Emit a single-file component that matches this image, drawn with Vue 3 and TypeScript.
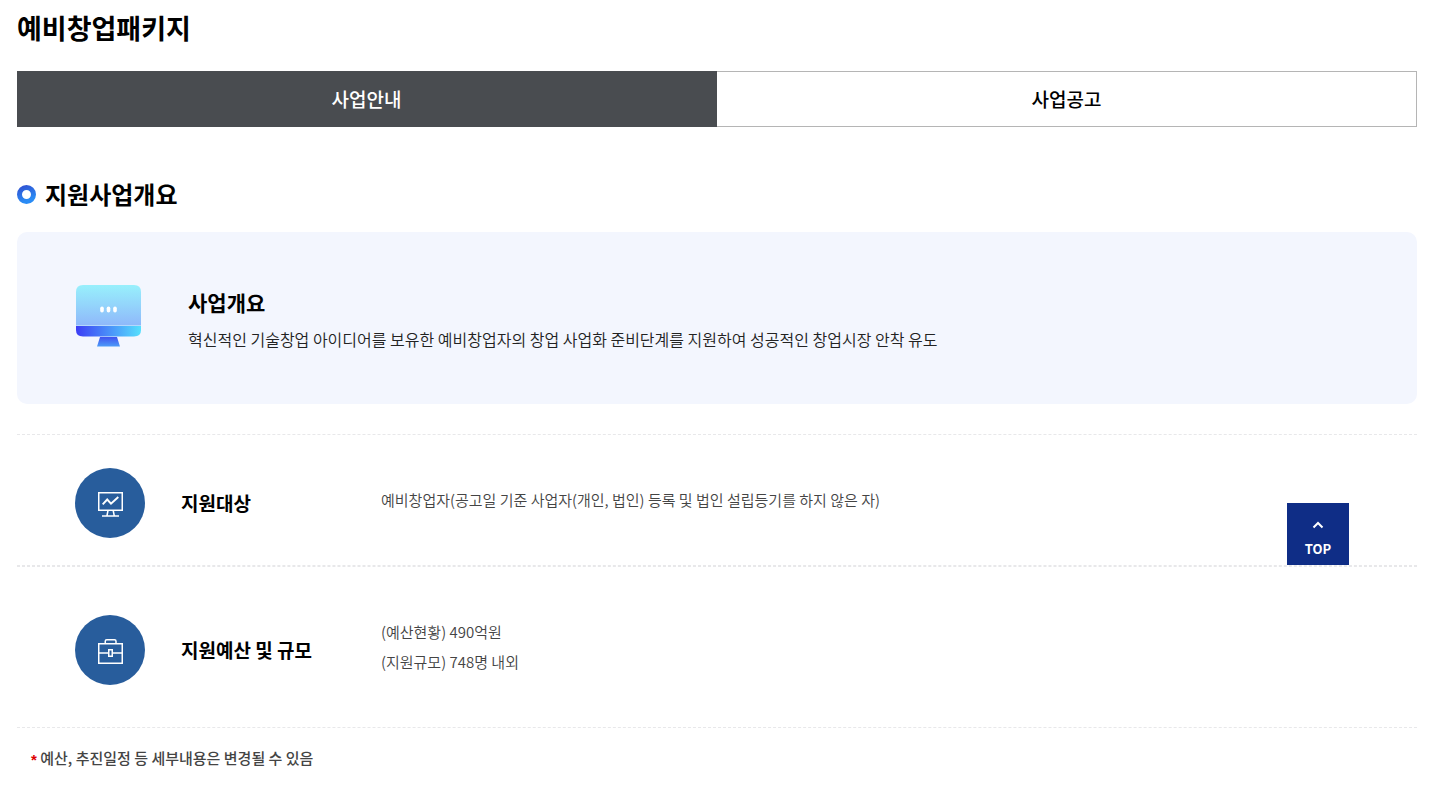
<script setup lang="ts">
import { ref } from 'vue'

type RowIcon = 'chart' | 'briefcase'
interface SupportRow {
  icon: RowIcon
  title: string
  lines: string[]
}

const tabs: string[] = ['사업안내', '사업공고']
const activeTab = ref(0)

const rows: SupportRow[] = [
  {
    icon: 'chart',
    title: '지원대상',
    lines: ['예비창업자(공고일 기준 사업자(개인, 법인) 등록 및 법인 설립등기를 하지 않은 자)'],
  },
  {
    icon: 'briefcase',
    title: '지원예산 및 규모',
    lines: ['(예산현황) 490억원', '(지원규모) 748명 내외'],
  },
]

function scrollToTop(): void {
  window.scrollTo({ top: 0, behavior: 'smooth' })
}
</script>

<template>
  <main class="page">
    <h1 class="page-title">예비창업패키지</h1>

    <nav class="tabs">
      <button
        v-for="(tab, index) in tabs"
        :key="tab"
        type="button"
        class="tab"
        :class="{ active: index === activeTab }"
        :aria-pressed="index === activeTab"
        @click="activeTab = index"
      >{{ tab }}</button>
    </nav>

    <h2 class="section-title">
      <svg class="ring" viewBox="0 0 19 19" aria-hidden="true">
        <defs>
          <linearGradient id="ring-fill" x1="0" y1="0" x2="0.4" y2="1">
            <stop offset="0" stop-color="#2f55d4" />
            <stop offset="1" stop-color="#2a8cf5" />
          </linearGradient>
        </defs>
        <circle cx="9.5" cy="9.5" r="7" fill="none" stroke="url(#ring-fill)" stroke-width="5" />
      </svg>
      <span>지원사업개요</span>
    </h2>

    <section class="overview">
      <svg class="monitor" viewBox="0 0 65 62" aria-hidden="true">
        <defs>
          <linearGradient id="screen-fill" x1="0" y1="0" x2="0" y2="1">
            <stop offset="0" stop-color="#98f0fc" />
            <stop offset="1" stop-color="#8fb9fa" />
          </linearGradient>
          <linearGradient id="bar-fill" x1="0" y1="0" x2="1" y2="0">
            <stop offset="0" stop-color="#3c3df5" />
            <stop offset="1" stop-color="#56e0fd" />
          </linearGradient>
          <linearGradient id="stand-fill" x1="0" y1="0" x2="0" y2="1">
            <stop offset="0" stop-color="#4052ef" />
            <stop offset="1" stop-color="#4c9cf8" />
          </linearGradient>
        </defs>
        <path d="M24 52H41L44 61.5H21Z" fill="url(#stand-fill)" />
        <path d="M0 40V7Q0 0 7 0H58Q65 0 65 7V40Z" fill="url(#screen-fill)" />
        <path d="M0 41H65V45Q65 51.500 58 51.500H7Q0 51.500 0 45Z" fill="url(#bar-fill)" />
        <path d="M0 40.500H65" stroke="#b4d8fc" />
        <g fill="#fff">
          <rect x="24.200" y="21.500" width="3.600" height="6" rx="1.800" />
          <rect x="30.700" y="21.500" width="3.600" height="6" rx="1.800" />
          <rect x="37.200" y="21.500" width="3.600" height="6" rx="1.800" />
        </g>
      </svg>
      <div>
        <h3 class="overview-title">사업개요</h3>
        <p class="overview-text">혁신적인 기술창업 아이디어를 보유한 예비창업자의 창업 사업화 준비단계를 지원하여 성공적인 창업시장 안착 유도</p>
      </div>
    </section>

    <ul class="rows">
      <li v-for="row in rows" :key="row.title" class="row">
        <span class="badge">
          <svg viewBox="0 0 26 26" aria-hidden="true">
            <g v-if="row.icon === 'chart'" fill="none" stroke="#fff" stroke-width="1.5">
              <path d="M1.750 1.750H25.250V19.250H1.750Z" />
              <path d="M5.700 13.300L10.200 8.500L14 12.700L21.300 6" stroke-width="1.9" />
              <path d="M11 19.500L10 24.500M16.200 19.500L17.200 24.500M5 25H22" />
            </g>
            <g v-else fill="none" stroke="#fff" stroke-width="1.5">
              <path d="M1.750 5.750H25.250V25.250H1.750ZM8.250 5.750V3.250Q8.250 1.750 9.750 1.750H17.500Q19 1.750 19 3.250V5.750" />
              <path d="M1.750 15H11.500M15.500 15H25.250" />
              <path d="M11.750 11.750H15.250V18.250H11.750Z" />
            </g>
          </svg>
        </span>
        <h3 class="row-title">{{ row.title }}</h3>
        <div class="row-text">
          <p v-for="line in row.lines" :key="line">{{ line }}</p>
        </div>
      </li>
    </ul>

    <p class="note"><span class="star">*</span> 예산, 추진일정 등 세부내용은 변경될 수 있음</p>

    <button type="button" class="top-button" @click="scrollToTop">
      <svg viewBox="0 0 12 8" aria-hidden="true">
        <path d="M1.500 6.500L6 2L10.500 6.500" fill="none" stroke="#fff" stroke-width="2" />
      </svg>
      <span>TOP</span>
    </button>
  </main>
</template>

<style>
body {
  margin: 0;
  background: #fff;
}
</style>

<style scoped>
.page {
  padding: 8px 15px 16px 17px;
  color: #000;
  font-family: "Noto Sans CJK KR", "Noto Sans", sans-serif;
}

h1, h2, h3, p, ul {
  margin: 0;
  padding: 0;
}

h1, h2, h3 {
  font-weight: 700;
}

.page-title {
  font-size: 27px;
  line-height: 40px;
}

.tabs {
  display: flex;
  margin-top: 23px;
}

.tab {
  flex: 1;
  height: 56px;
  padding: 0;
  border: 1px solid #b5b5b5;
  border-left: 0;
  background: #fff;
  color: #000;
  font: 500 19px/28px "Noto Sans CJK KR", sans-serif;
  cursor: pointer;
}

.tab.active {
  border-color: #494c50;
  background: #494c50;
  color: #fff;
}

.section-title {
  display: flex;
  align-items: center;
  gap: 9px;
  margin-top: 49px;
  font-size: 24px;
  line-height: 36px;
}

.ring {
  width: 19px;
  height: 19px;
}

.overview {
  display: flex;
  align-items: flex-start;
  gap: 47px;
  margin-top: 20px;
  padding: 53px 59px 49px;
  border-radius: 10px;
  background: #f3f6fe;
}

.monitor {
  flex: none;
  width: 65px;
  height: 62px;
}

.overview-title {
  margin-top: 2px;
  font-size: 21px;
  line-height: 30px;
}

.overview-text {
  margin-top: 6px;
  color: #222;
  font-size: 16px;
  font-weight: 350;
  line-height: 32px;
}

.rows {
  margin-top: 30px;
  list-style: none;
}

.row {
  display: grid;
  grid-template-columns: 70px 164px 1fr;
  column-gap: 36px;
  align-items: center;
  padding: 33px 58px 27px;
  border-top: 1px dashed #e8e8ea;
  border-bottom: 1px dashed #e8e8ea;
}

.row:last-child {
  padding: 48px 58px 42px;
}

.badge {
  display: flex;
  align-items: center;
  justify-content: center;
  height: 70px;
  border-radius: 50%;
  background: #285d9c;
}

.badge svg {
  width: 26px;
  height: 26px;
  margin-top: 2px;
}

.row-title {
  font-size: 19px;
  line-height: 28px;
}

.row-text {
  padding-bottom: 6px;
  color: #444;
  font-size: 15px;
  font-weight: 350;
  line-height: 30px;
}

.note {
  margin-top: 15px;
  padding-left: 14px;
  color: #444;
  font-size: 15px;
  font-weight: 500;
  line-height: 30px;
}

.star {
  color: #d00;
  font-family: "Liberation Sans", sans-serif;
  font-weight: 700;
  line-height: 1;
  vertical-align: -1px;
}

.top-button {
  position: fixed;
  right: 83px;
  bottom: 224px;
  display: flex;
  flex-direction: column;
  align-items: center;
  gap: 10px;
  width: 62px;
  height: 62px;
  padding: 18px 0 0;
  border: 0;
  background: #0f2d86;
  color: #fff;
  font: 700 13px/20px "Noto Sans CJK KR", sans-serif;
  cursor: pointer;
}

.top-button svg {
  width: 12px;
  height: 8px;
}
</style>
